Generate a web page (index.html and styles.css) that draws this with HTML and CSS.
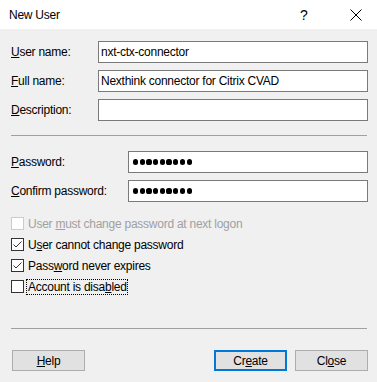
FILE: index.html
```html
<!DOCTYPE html>
<html>
<head>
<meta charset="utf-8">
<link rel="stylesheet" href="styles.css">
</head>
<body>
<div class="window">
  <div class="titlebar">
    <span class="title">New User</span>
    <span class="help-q">?</span>
    <svg class="close-x" width="12" height="12" viewBox="0 0 12 12"><path d="M0.5 0.5 L11.5 11.5 M11.5 0.5 L0.5 11.5" stroke="#000" stroke-width="1" fill="none"/></svg>
  </div>
  <div class="content">
    <div class="fields top-fields">
      <div class="row"><label class="lbl"><u>U</u>ser name:</label><div class="input">nxt-ctx-connector</div></div>
      <div class="row"><label class="lbl"><u>F</u>ull name:</label><div class="input">Nexthink connector for Citrix CVAD</div></div>
      <div class="row"><label class="lbl"><u>D</u>escription:</label><div class="input"></div></div>
    </div>
    <div class="sep sep1"></div>
    <div class="fields pw-fields">
      <div class="row"><label class="lbl wide"><u>P</u>assword:</label><div class="input dots"><i></i><i></i><i></i><i></i><i></i><i></i><i></i><i></i><i></i></div></div>
      <div class="row"><label class="lbl wide"><u>C</u>onfirm password:</label><div class="input dots"><i></i><i></i><i></i><i></i><i></i><i></i><i></i><i></i><i></i></div></div>
    </div>
    <div class="checks">
      <div class="check disabled"><span class="box"></span><span class="ctext">User <u>m</u>ust change password at next logon</span></div>
      <div class="check"><span class="box"><svg width="11" height="11" viewBox="0 0 11 11"><path d="M1.5 5.5 L4 8 L9.5 2.5" stroke="#333" stroke-width="1" fill="none"/></svg></span><span class="ctext">U<u>s</u>er cannot change password</span></div>
      <div class="check"><span class="box"><svg width="11" height="11" viewBox="0 0 11 11"><path d="M1.5 5.5 L4 8 L9.5 2.5" stroke="#333" stroke-width="1" fill="none"/></svg></span><span class="ctext">Pass<u>w</u>ord never expires</span></div>
      <div class="check"><span class="box"></span><span class="ctext focus">Account is disa<u>b</u>led</span></div>
    </div>
    <div class="sep sep2"></div>
    <div class="buttons">
      <button class="btn"><u>H</u>elp</button>
      <span class="spacer"></span>
      <button class="btn default">Cr<u>e</u>ate</button>
      <button class="btn">Cl<u>o</u>se</button>
    </div>
  </div>
</div>
</body>
</html>
```

FILE: styles.css
```css
html, body {
  margin: 0;
  padding: 0;
}
body {
  background: #f0f0f0;
  font-family: "Liberation Sans", Arial, sans-serif;
  font-size: 12px;
  letter-spacing: -0.25px;
  color: #000;
  width: 377px;
  height: 382px;
  overflow: hidden;
}
.titlebar {
  height: 29px;
  background: #fff;
  display: flex;
  align-items: center;
  padding-left: 9px;
}
.title {
  font-size: 12px;
  flex: 1;
}
.help-q {
  font-size: 14px;
  width: 12px;
  margin-right: 38px;
}
.close-x {
  margin-right: 15px;
}
.content {
  padding: 0 9px 0 11px;
}
.fields {
  display: flex;
  flex-direction: column;
  gap: 7px;
}
.top-fields {
  margin-top: 12px;
}
.row {
  display: flex;
  align-items: center;
  height: 22px;
}
.lbl {
  width: 87px;
  flex: none;
}
.lbl.wide {
  width: 117px;
}
.input {
  flex: 1;
  height: 22px;
  box-sizing: border-box;
  background: #fff;
  border: 1px solid #7a7a7a;
  padding: 0 2px;
  line-height: 20px;
  white-space: nowrap;
  overflow: hidden;
}
.dots {
  display: flex;
  align-items: center;
  gap: 1.5px;
  padding-left: 4px;
}
.dots i {
  width: 5.2px;
  height: 5.2px;
  border-radius: 50%;
  background: #000;
}
.sep {
  height: 1px;
  background: #a0a0a0;
  margin-right: 1px;
}
.sep1 {
  margin-top: 14px;
}
.pw-fields {
  margin-top: 15px;
}
.checks {
  margin-top: 11px;
}
.check {
  height: 21px;
  display: flex;
  align-items: center;
}
.box {
  width: 13px;
  height: 13px;
  box-sizing: border-box;
  border: 1px solid #333;
  background: #fff;
  margin-right: 4px;
  display: flex;
  align-items: center;
  justify-content: center;
}
.check.disabled .box {
  border-color: #cccccc;
}
.check.disabled .ctext {
  color: #a0a0a0;
}
.ctext.focus {
  outline: 1px dotted #000;
  outline-offset: 0;
  margin-left: -1px;
  padding-left: 1px;
}
.sep2 {
  margin-top: 31px;
}
.buttons {
  margin-top: 21px;
  display: flex;
  padding-left: 1px;
}
.spacer {
  flex: 1;
}
.btn {
  width: 73px;
  height: 21px;
  box-sizing: border-box;
  background: #e1e1e1;
  border: 1px solid #adadad;
  font-family: "Liberation Sans", Arial, sans-serif;
  font-size: 12px;
  letter-spacing: -0.25px;
  color: #000;
  padding: 0;
  margin: 0 0 0 8px;
}
.btn:first-child {
  margin-left: 0;
}
.btn.default {
  border: 2px solid #0078d7;
}
```
